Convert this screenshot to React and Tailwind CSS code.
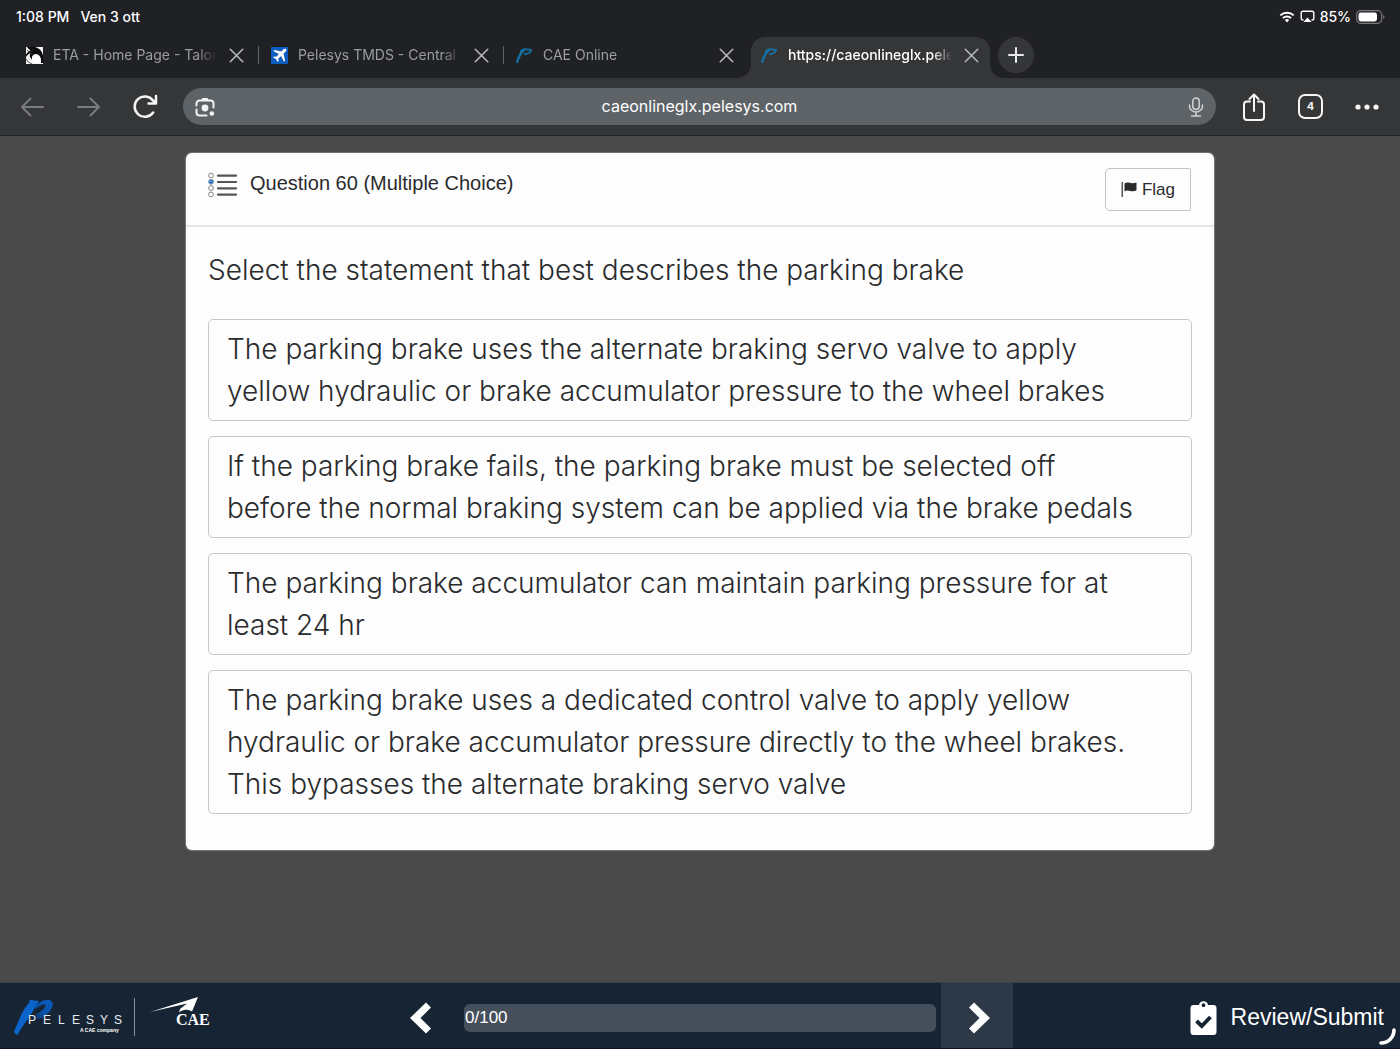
import React from 'react';
import { X } from 'lucide-react';

function TalonIcon() {
  return (
    <svg viewBox="0 0 17 17" className="size-[17px] shrink-0" aria-hidden="true">
      <rect width="17" height="17" fill="#f4f4f4" />
      <path d="M1 0H9C13 1 16.500 4 17 9V16H15C15.800 11 13 7 9.500 7C6.500 7.500 5.500 10 6 13C4 11 3 8 4.500 6C3 6.500 1.500 8 0 10V7.500C1.500 5 3 4 4.500 3.500C3.500 2.500 2 1.500 1 0Z" fill="#0b0b0b" />
      <circle cx="10.300" cy="11.800" r="4.300" fill="#fff" />
      <path d="M0 12Q1.500 15.500 6 17M1 3L7 8M4 5L8 2" stroke="#333" strokeWidth=".8" fill="none" />
    </svg>
  );
}

function PlaneIcon() {
  return (
    <svg viewBox="0 0 17 17" className="size-[17px] shrink-0" aria-hidden="true">
      <rect width="17" height="17" rx="1" fill="#0d5cc0" />
      <path d="M15 2C14.200 1.300 13 1.800 12.200 2.600L10.300 4.500L3.300 2.900L2.200 4L7.900 6.900L5.300 9.700L3 9.400L2 10.400L5 12L6.600 15L7.600 14L7.300 11.700L10.100 9.100L13 14.800L14.100 13.700L12.500 6.700L14.400 4.800C15.200 4 15.700 2.800 15 2Z" fill="#fff" />
    </svg>
  );
}

function PelesysIcon() {
  return (
    <svg viewBox="0 0 17 17" className="size-[17px] shrink-0" aria-hidden="true">
      <path d="M1.200 14.800C2.500 10.500 4.500 6 7.500 3.500" fill="none" stroke="#1471a3" strokeWidth="2.400" strokeLinecap="round" />
      <path d="M5 4L8 2.300C10 2.500 12.500 2 15 2.800C16 4 12.500 6.500 9 7.200" fill="none" stroke="#1471a3" strokeWidth="1.900" strokeLinecap="round" />
    </svg>
  );
}

const tabs = [
  { title: 'ETA - Home Page - Talon', Icon: TalonIcon, divider: true },
  { title: 'Pelesys TMDS - Central', Icon: PlaneIcon, divider: true },
  { title: 'CAE Online', Icon: PelesysIcon, divider: false },
];

function TabBody({ title, Icon, active }) {
  return (
    <>
      <button type="button" className="flex min-w-0 flex-1 items-center gap-[10px] text-left">
        <Icon />
        <span className={`min-w-0 flex-1 overflow-hidden whitespace-nowrap text-[14px] leading-5 [mask-image:linear-gradient(to_right,black_88%,transparent)] ${active ? 'font-medium text-white' : 'text-[#9b9da1]'}`}>
          {title}
        </span>
      </button>
      <button type="button" aria-label={`Close ${title}`} className="ml-[7px] text-[#b5b6b9]">
        <X size={25} strokeWidth={1.5} />
      </button>
    </>
  );
}

function StatusBar() {
  return (
    <div className="flex h-[37px] items-center justify-between pr-[15px] pl-4 pb-1 text-[14px] font-medium text-white">
      <div className="flex gap-[11px]">
        <span>1:08 PM</span>
        <span>Ven 3 ott</span>
      </div>
      <div className="flex items-center gap-[5px]">
        <svg viewBox="0 0 16 12" className="h-3 w-4" aria-hidden="true">
          <path d="M1.300 4.400C5 .9 11 .9 14.700 4.400M3.900 7.100C6.200 5 9.800 5 12.100 7.100" fill="none" stroke="#fff" strokeWidth="1.900" />
          <path d="M5.800 9Q8 7.200 10.200 9L8 11.400Z" fill="#fff" />
        </svg>
        <svg viewBox="0 0 15 13" className="h-[13px] w-[15px]" aria-hidden="true">
          <path d="M3.500 10H3A1.800 1.800 0 0 1 1.200 8.200V3A1.800 1.800 0 0 1 3 1.200H12A1.800 1.800 0 0 1 13.800 3V8.200A1.800 1.800 0 0 1 12 10H11.500" fill="none" stroke="#fff" strokeWidth="1.400" />
          <path d="M7.500 7.500L11.500 12H3.500Z" fill="#fff" />
        </svg>
        <span>85%</span>
        <svg viewBox="0 0 29 14" className="h-[14px] w-[29px]" aria-hidden="true">
          <rect x=".7" y=".7" width="25" height="12.600" rx="4" fill="none" stroke="#77787b" strokeWidth="1.200" />
          <rect x="2.500" y="2.500" width="18.500" height="9" rx="2.400" fill="#fff" />
          <path d="M27.200 5V9Q28.500 8.400 28.500 7T27.200 5Z" fill="#77787b" />
        </svg>
      </div>
    </div>
  );
}

function TabStrip() {
  return (
    <nav aria-label="Tabs" className="flex h-[41px] items-start pl-[14px]">
      {tabs.map((tab) => (
        <div key={tab.title} className="flex h-9 w-[245px] items-center pl-3">
          <TabBody {...tab} />
          <span className={`ml-[9px] h-[18px] w-px ${tab.divider ? 'bg-[#5f656b]' : 'bg-transparent'}`} />
        </div>
      ))}
      <div className="relative ml-[2px] flex h-[41px] w-[239px] items-center rounded-t-[14px] bg-[#353638] pr-[6px] pb-[5px] pl-[10px]">
        <svg viewBox="0 0 14 14" className="absolute bottom-0 -left-[14px] size-[14px]" aria-hidden="true">
          <path d="M14 0V14H0A14 14 0 0 0 14 0Z" fill="#353638" />
        </svg>
        <TabBody title="https://caeonlineglx.pele" Icon={PelesysIcon} active />
        <svg viewBox="0 0 14 14" className="absolute -right-[14px] bottom-0 size-[14px]" aria-hidden="true">
          <path d="M0 0V14H14A14 14 0 0 1 0 0Z" fill="#353638" />
        </svg>
      </div>
      <button type="button" aria-label="New tab" className="ml-2 flex size-9 items-center justify-center rounded-full bg-[#353638]">
        <svg viewBox="0 0 16 16" className="size-4" aria-hidden="true">
          <path d="M8 1V15M1 8H15" stroke="#e8e9ea" strokeWidth="2" strokeLinecap="round" />
        </svg>
      </button>
    </nav>
  );
}

function Toolbar() {
  return (
    <div className="flex h-[58px] items-center border-b border-[#242526] bg-[#353638] pr-5 pl-5">
      <button type="button" aria-label="Back">
        <svg viewBox="0 0 24 20" className="h-5 w-6" aria-hidden="true">
          <path d="M23 10H2M10.500 1.500L2 10L10.500 18.500" fill="none" stroke="#7a7b7d" strokeWidth="2" strokeLinecap="round" strokeLinejoin="round" />
        </svg>
      </button>
      <button type="button" aria-label="Forward" className="ml-8">
        <svg viewBox="0 0 24 20" className="h-5 w-6" aria-hidden="true">
          <path d="M2 10H23M14.500 1.500L23 10L14.500 18.500" fill="none" stroke="#7a7b7d" strokeWidth="2" strokeLinecap="round" strokeLinejoin="round" />
        </svg>
      </button>
      <button type="button" aria-label="Reload" className="ml-8">
        <svg viewBox="0 0 26 26" className="size-[26px]" aria-hidden="true">
          <path d="M21.200 18.500A10.200 10.200 0 1 1 21 6.500L23.500 9M24 2V9.500H16.500" fill="none" stroke="#f5f5f5" strokeWidth="2.500" strokeLinecap="round" strokeLinejoin="round" />
        </svg>
      </button>
      <div className="ml-[25px] flex h-[37px] min-w-0 flex-1 items-center rounded-full bg-[#5e6367] px-3">
        <button type="button" aria-label="Search with camera">
          <svg viewBox="0 0 20 20" className="size-5" aria-hidden="true">
            <path d="M1.500 8.500V6.500A3 3 0 0 1 4.500 3.500H15.500A3 3 0 0 1 18.500 6.500V10.500M1.500 12.500V15.500A3 3 0 0 0 4.500 18.500H11.500" fill="none" stroke="#f2f2f2" strokeWidth="2" strokeLinecap="round" strokeLinejoin="round" />
            <path d="M6 3.500L7.500 1H12.500L14 3.500Z" fill="#f2f2f2" />
            <circle cx="10" cy="11" r="3.400" fill="#f2f2f2" />
            <circle cx="16.800" cy="16.500" r="2.300" fill="#f2f2f2" />
          </svg>
        </button>
        <input aria-label="Address" defaultValue="caeonlineglx.pelesys.com" className="min-w-0 flex-1 bg-transparent pr-1 pb-[2px] text-center text-[16px] leading-6 text-white outline-none" />
        <button type="button" aria-label="Voice search">
          <svg viewBox="0 0 16 20" className="h-5 w-4" aria-hidden="true">
            <path d="M8 1A3.200 3.200 0 0 0 4.800 4.200V9.200A3.200 3.200 0 0 0 11.200 9.200V4.200A3.200 3.200 0 0 0 8 1ZM1.500 8V9A6.500 6 0 0 0 14.500 9V8M8 15V19M3.500 19H12.500" fill="none" stroke="#d0d2d3" strokeWidth="1.500" strokeLinecap="round" />
          </svg>
        </button>
      </div>
      <button type="button" aria-label="Share" className="ml-[26px]">
        <svg viewBox="0 0 24 28" className="h-7 w-6" aria-hidden="true">
          <path d="M8 8.500H5A3 3 0 0 0 2 11.500V24A3 3 0 0 0 5 27H19A3 3 0 0 0 22 24V11.500A3 3 0 0 0 19 8.500H16M12 18V1.500M7.500 6L12 1.500L16.500 6" fill="none" stroke="#f5f5f5" strokeWidth="2" strokeLinecap="round" strokeLinejoin="round" />
        </svg>
      </button>
      <button type="button" aria-label="4 open tabs" className="ml-8 flex size-[25px] items-center justify-center rounded-[7px] border-2 border-[#f5f5f5] text-[11px] font-bold text-[#f5f5f5]">
        4
      </button>
      <button type="button" aria-label="More" className="ml-8">
        <svg viewBox="0 0 25 6" className="h-[6px] w-[25px]" aria-hidden="true">
          <circle cx="3" cy="3" r="2.600" fill="#f5f5f5" />
          <circle cx="12" cy="3" r="2.600" fill="#f5f5f5" />
          <circle cx="21" cy="3" r="2.600" fill="#f5f5f5" />
        </svg>
      </button>
    </div>
  );
}

const options = [
  ['The parking brake uses the alternate braking servo valve to apply', 'yellow hydraulic or brake accumulator pressure to the wheel brakes'],
  ['If the parking brake fails, the parking brake must be selected off', 'before the normal braking system can be applied via the brake pedals'],
  ['The parking brake accumulator can maintain parking pressure for at', 'least 24 hr'],
  ['The parking brake uses a dedicated control valve to apply yellow', 'hydraulic or brake accumulator pressure directly to the wheel brakes.', 'This bypasses the alternate braking servo valve'],
];

function QuestionIcon() {
  return (
    <svg viewBox="0 0 30 26" className="h-[26px] w-[30px]" aria-hidden="true">
      {[3.5, 9.8, 16.1, 22.4].map((y, i) => (
        <g key={y}>
          <circle cx="3" cy={y} r="2.400" fill={i === 1 ? '#4f94dc' : '#fff'} stroke={i === 1 ? '#5e83ab' : '#777'} strokeWidth="0.900" />
          <path d={`M10 ${y + 0.2}H28`} stroke="#555" strokeWidth="2.200" strokeLinecap="round" />
        </g>
      ))}
      <path d="M2 10L3 11L5 8.500" stroke="#234f83" strokeWidth=".8" fill="none" />
    </svg>
  );
}

function QuestionCard() {
  return (
    <section className="mx-auto w-full max-w-[1028px] rounded-md bg-[#fdfdfd] text-[#2a2b2d] shadow-[0_0_1px_1px_#777]">
      <header className="flex items-start justify-between border-b-2 border-[#e6e6e6] pt-[15px] pr-[23px] pb-[14px] pl-[22px] font-['Liberation_Sans',Arial,sans-serif]">
        <div className="flex items-center gap-3 pt-[3px]">
          <QuestionIcon />
          <h1 className="pb-1 text-[20px] leading-6">Question 60 (Multiple Choice)</h1>
        </div>
        <button type="button" className="flex h-[43px] items-center gap-[5px] rounded-l-[5px] rounded-r-[2px] border border-[#c4c4c4] px-[15px] text-[17px]">
          <svg viewBox="0 0 16 17" className="h-[17px] w-4" aria-hidden="true">
            <path d="M1.200 1V16" stroke="#2a2b2d" strokeWidth="1.200" />
            <path d="M3.500 2.500C7-.2 9.500 3.800 15.500 1.500V9.500C10 12 7.500 7.500 3.500 10.500Z" fill="#2a2b2d" />
          </svg>
          Flag
        </button>
      </header>
      <div className="px-[22px] pt-[22px] pb-[36px] text-[28px] leading-[42px] font-light">
        <p>Select the statement that best describes the parking brake</p>
        <div className="mt-[28px] flex flex-col gap-[15px]">
          {options.map((lines) => (
            <button type="button" key={lines[0]} className="rounded-[5px] border border-[#c6c6c6] px-[18px] py-2 text-left">
              {lines.map((line) => (
                <span key={line} className="block">{line}</span>
              ))}
            </button>
          ))}
        </div>
      </div>
    </section>
  );
}

function PelesysLogo() {
  return (
    <svg viewBox="0 0 112 40" className="h-10 w-28" role="img" aria-label="Pelesys, a CAE company">
      <defs>
        <linearGradient id="bowl" x1="1" y1="0" x2="0" y2="1">
          <stop offset="0" stopColor="#0b5fc4" />
          <stop offset="0.600" stopColor="#0b4ea2" />
          <stop offset="1" stopColor="#12305a" />
        </linearGradient>
      </defs>
      <path d="M21 9C26 4 32 1.500 36.500 3.500C41 6.500 38 13 33 17.500C29 21 24 23 19.500 23L22 17C27 15 31 11 31.500 8C29.500 6.500 25 9 20.500 13Z" fill="url(#bowl)" />
      <path d="M3.500 38C1.500 37.500 .5 36 0 34C4 27 6 17 13 8.500L16 4.500L14.500 4L17 2.500C20 4 23 4 25 3.500C24 6 21.500 8 20 12C16 21 9 27 3.500 38Z" fill="#0a64cc" />
      <g fill="#e8edf3" fontFamily="Liberation Sans, Arial, sans-serif">
        <text x="14 29 44 58 72 86 100" y="27" fontSize="12">PELESYS</text>
        <text x="66" y="35" fontSize="5" fontWeight="bold" fill="#fff">A CAE company</text>
      </g>
    </svg>
  );
}

function CaeLogo() {
  return (
    <svg viewBox="0 0 62 32" className="h-8 w-[62px]" role="img" aria-label="CAE">
      <path d="M0 15L48 0L42 14.500C38 12 33 12 29 15.500L30 12L37 6.500Z" fill="#fff" />
      <text x="26" y="28" fontSize="16" fontWeight="bold" fontFamily="Liberation Serif, Times New Roman, serif" fill="#fff">CAE</text>
    </svg>
  );
}

function Footer() {
  return (
    <footer className="relative flex h-[67px] items-center border-t border-b border-t-[#3a4149] border-b-[#0c1521] bg-[#172433] pl-[14px] font-['Liberation_Sans',Arial,sans-serif] text-white">
      <div className="flex w-[390px] shrink-0 items-center pt-[3px]">
        <PelesysLogo />
        <span className="ml-2 h-[38px] w-px bg-[#8b9097]" />
        <div className="-mt-2 ml-[15px]">
          <CaeLogo />
        </div>
      </div>
      <button type="button" aria-label="Previous question" className="flex w-[60px] shrink-0 items-center pt-1 pl-[6px]">
        <svg viewBox="0 0 21 32" className="h-8 w-[21px]" aria-hidden="true">
          <path d="M16 .5L21 5.500L10.500 16L21 26.500L16 31.500L0 16Z" fill="#fff" />
        </svg>
      </button>
      <div role="progressbar" aria-label="Progress" aria-valuenow={0} aria-valuemin={0} aria-valuemax={100} className="mt-1 mr-[5px] h-7 min-w-0 flex-1 rounded-md bg-[#444f5b] pl-px text-[17px] leading-7">
        0/100
      </div>
      <button type="button" aria-label="Next question" className="flex w-[72px] shrink-0 items-center justify-center self-stretch bg-[#2d3947] pt-1 pl-1">
        <svg viewBox="0 0 21 32" className="h-8 w-[21px]" aria-hidden="true">
          <path d="M5 .5L21 16L5 31.500L0 26.500L10.500 16L0 5.500Z" fill="#fff" />
        </svg>
      </button>
      <div className="flex w-[387px] shrink-0 justify-end pr-4">
        <button type="button" className="flex items-center gap-[14px] pt-1 text-[23px]">
          <svg viewBox="0 0 27 36" className="h-9 w-[27px]" aria-hidden="true">
            <path fillRule="evenodd" d="M3.500 5H9A4.600 4.600 0 0 1 18 5H23.500A3 3 0 0 1 26.500 8V32A3 3 0 0 1 23.500 35H3.500A3 3 0 0 1 .5 32V8A3 3 0 0 1 3.500 5ZM13.500 3.300A1.900 1.900 0 1 0 13.500 7.100A1.900 1.900 0 1 0 13.500 3.300Z" fill="#fff" />
            <path d="M6.500 21L11.800 26L20.500 17" fill="none" stroke="#172433" strokeWidth="3.800" />
          </svg>
          Review/Submit
        </button>
      </div>
      <svg viewBox="0 0 17 17" className="absolute right-1 bottom-[3px] size-[17px]" aria-hidden="true">
        <path d="M2 15A13 13 0 0 0 15 2" fill="none" stroke="#fff" strokeWidth="3.600" strokeLinecap="round" />
      </svg>
    </footer>
  );
}

export default function App() {
  return (
    <div className="flex min-h-screen flex-col bg-[#4a4a4a] font-['Inter',sans-serif]">
      <div className="bg-[#202124]">
        <StatusBar />
        <TabStrip />
      </div>
      <Toolbar />
      <main className="flex-1 px-4 pt-[17px]">
        <QuestionCard />
      </main>
      <Footer />
    </div>
  );
}
